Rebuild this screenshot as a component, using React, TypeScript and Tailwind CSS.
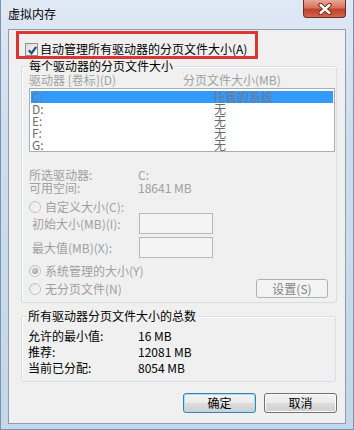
import React from 'react'

const drives = [
  { letter: 'C:', size: '托管的系统', selected: true },
  { letter: 'D:', size: '无' },
  { letter: 'E:', size: '无' },
  { letter: 'F:', size: '无' },
  { letter: 'G:', size: '无' },
]

function Checkbox() {
  return (
    <div className="w-[13px] h-[13px] border border-[#8e8f8f] bg-[linear-gradient(135deg,#dcdcdc,#fbfbfb)] p-[1px] shrink-0">
      <svg width="11" height="11" viewBox="0 0 11 11">
        <path d="M1.8 5.2 L4.5 8.2 L9.2 1.8" fill="none" stroke="#2c4a8c" strokeWidth="2.2" />
      </svg>
    </div>
  )
}

function Radio({ checked }: { checked?: boolean }) {
  return (
    <div className="w-[12px] h-[12px] rounded-full border border-[#c2c2c2] bg-[linear-gradient(135deg,#e6e6e6,#fafafa)] flex items-center justify-center shrink-0">
      {checked && <div className="w-[6px] h-[6px] rounded-full bg-[radial-gradient(circle_at_35%_35%,#d4d4d4,#8e8e8e)]" />}
    </div>
  )
}

function Button({ label, primary, disabled }: { label: string; primary?: boolean; disabled?: boolean }) {
  if (disabled) {
    return (
      <div className="w-[72px] h-[19px] rounded-[3px] border border-[#adb2b5] bg-[#f4f4f4] flex items-center justify-center text-[#838383] leading-none">
        {label}
      </div>
    )
  }
  return (
    <div
      className={
        primary
          ? 'w-[73px] h-[20px] rounded-[3px] border border-[#3c7fb1] shadow-[inset_0_0_0_1px_#a6e0f8] bg-[linear-gradient(180deg,#f2f2f2_0%,#ebebeb_50%,#dddddd_50%,#cfcfcf_100%)] flex items-center justify-center text-black leading-none'
          : 'w-[73px] h-[20px] rounded-[3px] border border-[#707070] shadow-[inset_0_0_0_1px_#fcfcfc] bg-[linear-gradient(180deg,#f2f2f2_0%,#ebebeb_50%,#dddddd_50%,#cfcfcf_100%)] flex items-center justify-center text-black leading-none'
      }
    >
      {label}
    </div>
  )
}

export default function App() {
  return (
    <div className="w-[354px] h-[430px] flex flex-col bg-[linear-gradient(180deg,#dfe9f4_0%,#cfdeee_30%,#c4d6e9_100%)] border-x border-b border-[#7d93ab] text-[12px] text-black font-['Noto_Sans_CJK_SC','Microsoft_YaHei',sans-serif] overflow-hidden">
      {/* Title bar */}
      <div className="h-[29px] flex justify-between pl-[7px] pr-[7px] shrink-0">
        <div className="pt-[6px] leading-[16px] text-[12px]">虚拟内存</div>
        <div className="w-[43px] h-[18px] rounded-b-[4px] border border-t-0 border-[#6b2b20] bg-[linear-gradient(180deg,#e9a797_0%,#d8735d_45%,#c3412a_55%,#d0664c_100%)] flex items-center justify-center">
          <svg width="14" height="12" viewBox="0 0 14 12">
            <path d="M2.5 2 L11.5 10 M11.5 2 L2.5 10" stroke="#5a1d12" strokeWidth="4.2" strokeLinecap="round" />
            <path d="M2.5 2 L11.5 10 M11.5 2 L2.5 10" stroke="#ffffff" strokeWidth="2.4" strokeLinecap="round" />
          </svg>
        </div>
      </div>

      {/* Client area */}
      <div className="mx-[7px] w-[338px] h-[395px] border border-[#8c9db1] bg-[#f0f0f0] shrink-0 flex flex-col">
        {/* Auto manage (highlighted) */}
        <div className="mt-[1px] ml-[7px] w-[242px] h-[28px] border-[3px] border-[#dd3434] flex items-start pl-[6px] pt-[8px] gap-[2px]">
          <div className="mt-[1px]">
            <Checkbox />
          </div>
          <div className="leading-[14px] whitespace-nowrap">自动管理所有驱动器的分页文件大小(A)</div>
        </div>

        {/* Per drive group */}
        <div className="mt-[7px] ml-[12px] w-[316px] h-[237px] border border-[#d5dfe5] rounded-[3px] shadow-[inset_1px_1px_0_#ffffff] flex flex-col">
          <div className="-mt-[8px] ml-[5px] px-[2px] w-fit bg-[#f0f0f0] leading-[14px]">每个驱动器的分页文件大小</div>

          <div className="pl-[7px] grid grid-cols-[154px_1fr] leading-[14px] text-[#a0a0a0]">
            <div>驱动器 [卷标](D)</div>
            <div>分页文件大小(MB)</div>
          </div>

          <div className="mt-[1px] ml-[7px] w-[306px] h-[64px] border border-[#a9aeb3] bg-white pt-[2px] px-[1px]">
            {drives.map((d) => (
              <div
                key={d.letter}
                className={
                  d.selected
                    ? 'h-[12px] leading-[12px] grid grid-cols-[181px_1fr] pl-[1px] bg-[#3399ff] text-[#6f7888]'
                    : 'h-[12px] leading-[12px] grid grid-cols-[181px_1fr] pl-[1px] text-[#6d6d6d]'
                }
              >
                <div>{d.letter}</div>
                <div className={d.selected ? '' : 'pl-[1px]'}>{d.size}</div>
              </div>
            ))}
          </div>

          <div className="mt-[16px] pl-[7px] grid grid-cols-[109px_1fr] leading-[13px] text-[#a0a0a0]">
            <div>所选驱动器:</div>
            <div>C:</div>
            <div>可用空间:</div>
            <div>18641 MB</div>
          </div>

          <div className="mt-[7px] pl-[7px] h-[11px] flex items-center gap-[4px] text-[#a0a0a0]">
            <Radio />
            <span className="leading-[14px]">自定义大小(C):</span>
          </div>

          <div className="mt-[1px] pl-[10px] h-[21px] flex items-center text-[#a0a0a0]">
            <div className="w-[107px] leading-[14px]">初始大小(MB)(I):</div>
            <div className="w-[74px] h-[21px] border border-[#b8b8b8] bg-[#f4f4f4]" />
          </div>

          <div className="mt-[3px] pl-[10px] h-[21px] flex items-center text-[#a0a0a0]">
            <div className="w-[107px] leading-[14px]">最大值(MB)(X):</div>
            <div className="w-[74px] h-[21px] border border-[#b8b8b8] bg-[#f4f4f4]" />
          </div>

          <div className="mt-[7px] pl-[7px] h-[12px] flex items-center gap-[4px] text-[#a0a0a0]">
            <Radio checked />
            <span className="leading-[14px]">系统管理的大小(Y)</span>
          </div>

          <div className="mt-[2px] pl-[7px] pr-[8px] h-[19px] flex items-center text-[#a0a0a0]">
            <div className="flex items-center gap-[4px]">
              <Radio />
              <span className="leading-[14px]">无分页文件(N)</span>
            </div>
            <div className="ml-auto">
              <Button label="设置(S)" disabled />
            </div>
          </div>
        </div>

        {/* Totals group */}
        <div className="mt-[13px] ml-[12px] w-[315px] h-[66px] border border-[#d5dfe5] rounded-[3px] shadow-[inset_1px_1px_0_#ffffff] flex flex-col">
          <div className="-mt-[8px] ml-[4px] px-[2px] w-fit bg-[#f0f0f0] leading-[14px]">所有驱动器分页文件大小的总数</div>
          <div className="mt-[5px] pl-[6px] grid grid-cols-[110px_1fr] leading-[16px]">
            <div>允许的最小值:</div>
            <div>16 MB</div>
            <div>推荐:</div>
            <div>12081 MB</div>
            <div>当前已分配:</div>
            <div>8054 MB</div>
          </div>
        </div>

        {/* Dialog buttons */}
        <div className="mt-[11px] flex justify-end gap-[8px] pr-[8px]">
          <Button label="确定" primary />
          <Button label="取消" />
        </div>
      </div>
    </div>
  )
}
